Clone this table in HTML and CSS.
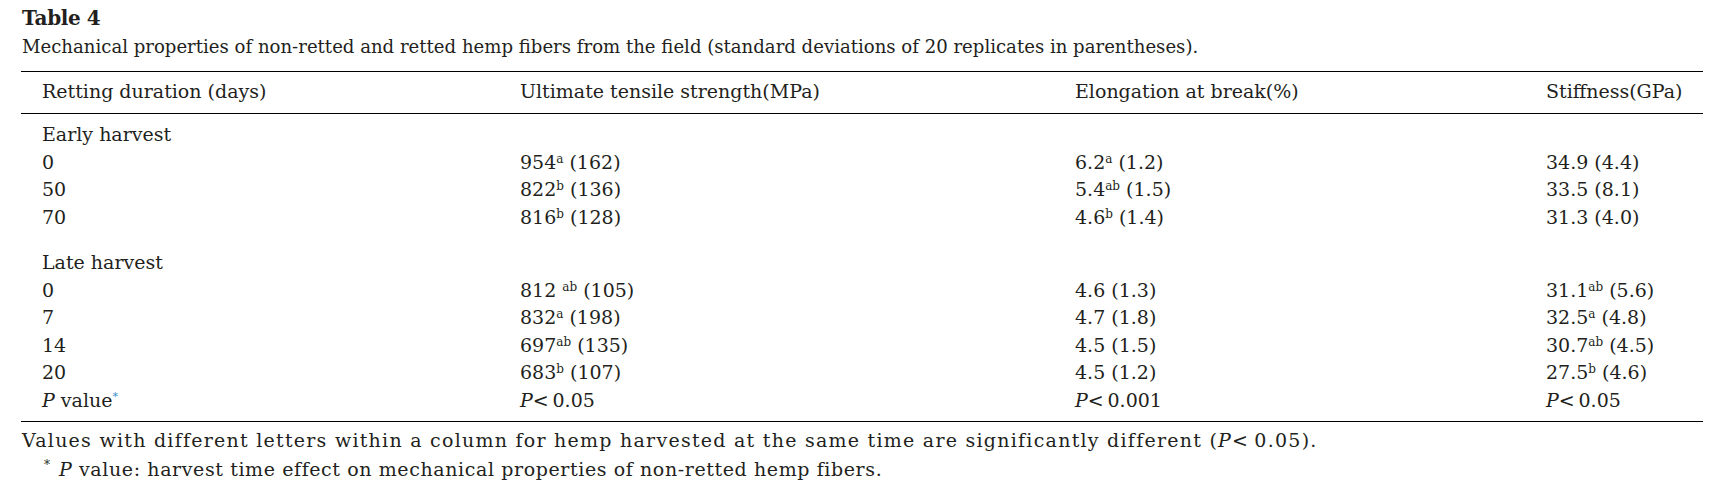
FILE: index.html
```html
<!DOCTYPE html>
<html lang="en">
<head>
<meta charset="utf-8">
<title>Table 4</title>
<link rel="stylesheet" href="styles.css">
</head>
<body>
<div class="page">
  <h2 class="title">Table 4</h2>
  <p class="caption">Mechanical properties of non-retted and retted hemp fibers from the field (standard deviations of 20 replicates in parentheses).</p>
  <table class="data">
    <colgroup>
      <col class="c1"><col class="c2"><col class="c3"><col class="c4">
    </colgroup>
    <thead>
      <tr>
        <th>Retting duration (days)</th>
        <th>Ultimate tensile strength(MPa)</th>
        <th>Elongation at break(%)</th>
        <th>Stiffness(GPa)</th>
      </tr>
    </thead>
    <tbody class="grp first">
      <tr class="grp-head"><td>Early harvest</td><td></td><td></td><td></td></tr>
      <tr><td>0</td><td>954<sup>a</sup> (162)</td><td>6.2<sup>a</sup> (1.2)</td><td>34.9 (4.4)</td></tr>
      <tr><td>50</td><td>822<sup>b</sup> (136)</td><td>5.4<sup>ab</sup> (1.5)</td><td>33.5 (8.1)</td></tr>
      <tr><td>70</td><td>816<sup>b</sup> (128)</td><td>4.6<sup>b</sup> (1.4)</td><td>31.3 (4.0)</td></tr>
    </tbody>
    <tbody class="grp last">
      <tr class="grp-head"><td>Late harvest</td><td></td><td></td><td></td></tr>
      <tr><td>0</td><td>812 <sup>ab</sup> (105)</td><td>4.6 (1.3)</td><td>31.1<sup>ab</sup> (5.6)</td></tr>
      <tr><td>7</td><td>832<sup>a</sup> (198)</td><td>4.7 (1.8)</td><td>32.5<sup>a</sup> (4.8)</td></tr>
      <tr><td>14</td><td>697<sup>ab</sup> (135)</td><td>4.5 (1.5)</td><td>30.7<sup>ab</sup> (4.5)</td></tr>
      <tr><td>20</td><td>683<sup>b</sup> (107)</td><td>4.5 (1.2)</td><td>27.5<sup>b</sup> (4.6)</td></tr>
      <tr class="pval"><td><i>P</i> value<sup class="link">*</sup></td><td><i>P</i>&lt;&#8201;0.05</td><td><i>P</i>&lt;&#8201;0.001</td><td><i>P</i>&lt;&#8201;0.05</td></tr>
    </tbody>
  </table>
  <div class="notes">
    <p class="note">Values with different letters within a column for hemp harvested at the same time are significantly different (<i>P</i>&lt;&#8201;0.05).</p>
    <p class="note fn"><span class="star">*</span><i>P</i> value: harvest time effect on mechanical properties of non-retted hemp fibers.</p>
  </div>
</div>
</body>
</html>
```
FILE: styles.css
```css
html, body {
  margin: 0;
  background: #ffffff;
}
body {
  font-family: "DejaVu Serif", "Liberation Serif", serif;
  color: #231f20;
}
.page {
  padding: 4px 20px 0 21px;
}
.title {
  margin: 0;
  padding-left: 1px;
  font-size: 20px;
  line-height: 29px;
  font-weight: bold;
  letter-spacing: -0.4px;
}
.caption {
  margin: 0 0 10px;
  padding-left: 1px;
  font-size: 18.1px;
  line-height: 28px;
}
.data {
  width: 1682px;
  border-collapse: collapse;
  table-layout: fixed;
  font-size: 19px;
  line-height: 27.5px;
}
.data col.c1 { width: 499px; }
.data col.c2 { width: 555px; }
.data col.c3 { width: 471px; }
.data col.c4 { width: 157px; }
.data th,
.data td {
  padding: 0;
  text-align: left;
  font-weight: normal;
  white-space: nowrap;
  vertical-align: baseline;
}
.data th:first-child,
.data td:first-child {
  padding-left: 21px;
}
.data thead th {
  border-top: 1px solid #000;
  border-bottom: 1px solid #000;
  padding-top: 6px;
  padding-bottom: 8px;
  line-height: 27px;
}
.data tbody.first tr:first-child td {
  padding-top: 7px;
}
.data tbody.last tr:first-child td {
  padding-top: 18px;
}
.data tbody.last tr:last-child td {
  padding-bottom: 7px;
  border-bottom: 1px solid #000;
}
.data sup {
  font-size: 12px;
  line-height: 0;
  vertical-align: 0.5em;
}
.data sup.link {
  color: #3d8fd1;
  font-size: 11px;
  vertical-align: 0.6em;
}
.notes {
  padding-top: 4px;
}
.note {
  margin: 0;
  padding-left: 1px;
  font-size: 19px;
  line-height: 29px;
  letter-spacing: 1.25px;
}
.note.fn {
  padding-left: 23px;
  letter-spacing: 0.6px;
}
.star {
  display: inline-block;
  width: 15px;
  font-size: 12px;
  vertical-align: 0.55em;
  line-height: 0;
}
```
